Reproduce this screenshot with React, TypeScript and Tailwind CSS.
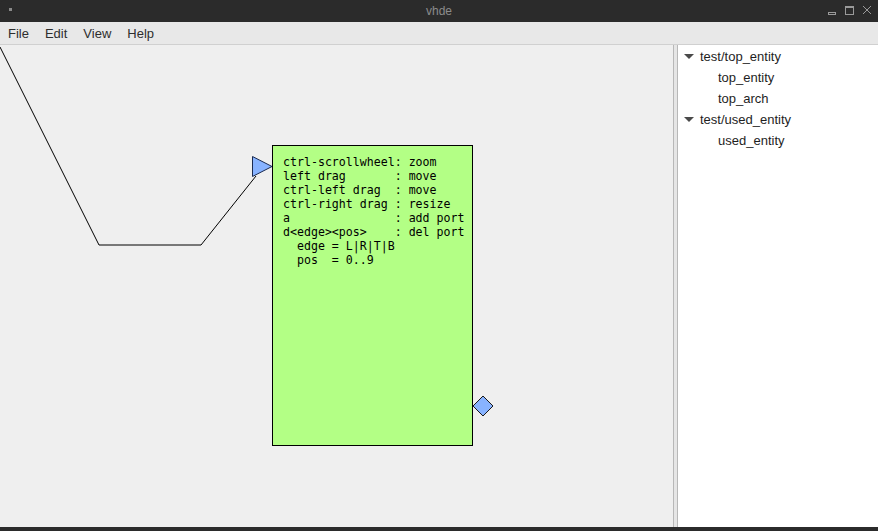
import React from "react";

export default function App() {
  return (
    <div className="w-[878px] h-[531px] flex flex-col overflow-hidden bg-[#2b2b2b]" style={{ fontFamily: '"Liberation Sans", Arial, sans-serif' }}>
      {/* title bar */}
      <div className="h-[22px] relative bg-[#2b2b2b] rounded-t-[6px] flex items-center justify-center">
        <div className="absolute left-[9px] top-[8px] w-[3px] h-[3px] bg-[#8a8a8a]" />
        <span className="text-[12px] text-[#8c8c8c]">vhde</span>
        <svg className="absolute right-0 top-0" width="60" height="22" viewBox="0 0 60 22">
          <rect x="10.5" y="12.5" width="7" height="2" fill="none" stroke="#9a9a9a" />
          <rect x="27.5" y="6.5" width="8" height="8" fill="none" stroke="#9a9a9a" strokeWidth="1" />
          <rect x="27.5" y="6.5" width="8" height="1.5" fill="#9a9a9a" />
          <path d="M45 6 L53 14 M53 6 L45 14" stroke="#9a9a9a" strokeWidth="1" />
        </svg>
      </div>
      {/* menu bar */}
      <div className="h-[23px] bg-[#e8e8e8] border-b border-[#d0d0d0] flex items-center pt-[2px] text-[13px] text-[#2e2e2e]">
        <span className="ml-[8px]">File</span>
        <span className="ml-[16px]">Edit</span>
        <span className="ml-[16px]">View</span>
        <span className="ml-[16px]">Help</span>
      </div>
      {/* content */}
      <div className="flex-1 flex min-h-0">
        <div className="relative w-[673px] bg-[#efefef] overflow-hidden">
          <svg className="absolute left-0 top-0" width="673" height="486">
            <polyline points="0,2 99,200 201,200 256,131" fill="none" stroke="#000" strokeWidth="1" />
            <polygon points="252.5,111.5 252.5,131.5 272,121.5" fill="#88b3ff" stroke="#1a2a50" strokeWidth="1" />
            <polygon points="483,351 493,361 483,371 473,361" fill="#88b3ff" stroke="#1a1a1a" strokeWidth="1" />
          </svg>
          <div className="absolute left-[272px] top-[100px] w-[201px] h-[301px] bg-[#b3ff85] border border-black pl-[10px] pt-[9px]">
            <pre className="text-[11.6px] leading-[14px] text-black" style={{ fontFamily: '"DejaVu Sans Mono", monospace' }}>
{`ctrl-scrollwheel: zoom
left drag       : move
ctrl-left drag  : move
ctrl-right drag : resize
a               : add port
d<edge><pos>    : del port
  edge = L|R|T|B
  pos  = 0..9`}
            </pre>
          </div>
        </div>
        <div className="w-[5px] bg-[#e6e6e6] border-l border-r border-[#b8b8b8]" />
        <div className="flex-1 bg-white text-[13px] text-[#1e1e1e] pt-[1px]">
          <div className="h-[21px] flex items-center">
            <svg className="ml-[6px]" width="10" height="8" viewBox="0 0 10 8"><polygon points="0,1 10,1 5,6" fill="#4a4a4a" /></svg>
            <span className="ml-[6px]">test/top_entity</span>
          </div>
          <div className="h-[21px] flex items-center pl-[40px]">top_entity</div>
          <div className="h-[21px] flex items-center pl-[40px]">top_arch</div>
          <div className="h-[21px] flex items-center">
            <svg className="ml-[6px]" width="10" height="8" viewBox="0 0 10 8"><polygon points="0,1 10,1 5,6" fill="#4a4a4a" /></svg>
            <span className="ml-[6px]">test/used_entity</span>
          </div>
          <div className="h-[21px] flex items-center pl-[40px]">used_entity</div>
        </div>
      </div>
      <div className="h-[4px] bg-[#2b2b2b]" />
    </div>
  );
}
